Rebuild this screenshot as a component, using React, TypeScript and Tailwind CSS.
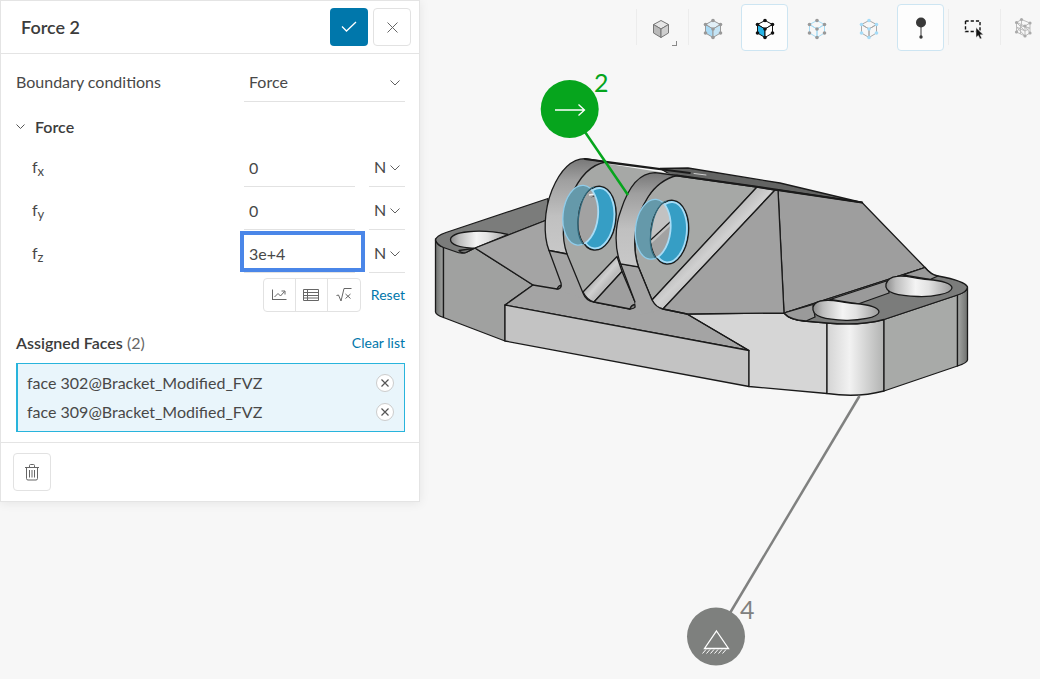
import type { ReactNode } from "react"

const units = ["N", "kN", "lbf"]
const components = [
  { id: "fx", axis: "x", value: "0" },
  { id: "fy", axis: "y", value: "0" },
  { id: "fz", axis: "z", value: "3e+4", active: true },
]
const faces = ["face 302@Bracket_Modified_FVZ", "face 309@Bracket_Modified_FVZ"]

function Chevron({ className = "" }: { className?: string }) {
  return (
    <svg className={className} width="10" height="6" viewBox="0 0 10 6" fill="none" stroke="currentColor">
      <path d="M0.5 0.5 5 5 9.5 0.5" />
    </svg>
  )
}

function PickList({ id, label, options }: { id: string; label?: string; options: string[] }) {
  return (
    <div className="relative w-full">
      <select
        id={id}
        aria-label={label}
        className="h-[38px] w-full appearance-none border-b border-[#e2e2e2] bg-transparent pb-0.5 pl-[5px] text-[#484848] outline-none"
      >
        {options.map((o) => (
          <option key={o}>{o}</option>
        ))}
      </select>
      <Chevron className="pointer-events-none absolute right-[5px] top-4 text-[#606060]" />
    </div>
  )
}

function ForceRow({ id, axis, value, active }: { id: string; axis: string; value: string; active?: boolean }) {
  return (
    <div className="flex h-[38px] items-center">
      <label htmlFor={id} className="flex-1 pb-0.5 pl-4">
        f<sub className="text-[13px]">{axis}</sub>
      </label>
      <div className="relative w-[111px]">
        <input
          id={id}
          defaultValue={value}
          className="block h-[38px] w-full border-b border-[#e2e2e2] bg-transparent pl-[5px] text-[#484848] outline-none"
        />
        {active && (
          <span className="pointer-events-none absolute -left-1 -right-2.5 -top-1 bottom-px border-4 border-[#4a86e8]" />
        )}
      </div>
      <div className="ml-3.5 w-9">
        <PickList id={id + "-unit"} label={"Unit of f" + axis} options={units} />
      </div>
    </div>
  )
}

function Panel() {
  return (
    <aside className="relative z-10 w-[420px] shrink-0 border border-[#e4e4e4] bg-white text-[#484848] shadow-[0_1px_10px_rgba(0,0,0,0.08)]">
      <header className="flex items-center gap-[5px] border-b border-[#e4e4e4] py-[7px] pl-5 pr-2">
        <h1 className="flex-1 text-lg font-semibold text-[#3c3c3c]">Force 2</h1>
        <button aria-label="Apply" className="flex size-[38px] items-center justify-center rounded-sm bg-[#0077ab] text-white">
          <svg width="16" height="12" viewBox="0 0 16 12" fill="none" stroke="currentColor" strokeWidth="1.3">
            <path d="M1 5.5 5.5 10 15 1" />
          </svg>
        </button>
        <button aria-label="Close" className="flex size-[38px] items-center justify-center rounded-sm border border-[#e2e2e2] text-[#666]">
          <svg width="11" height="11" viewBox="0 0 11 11" stroke="currentColor">
            <path d="M0.5 0.5 10.5 10.5M10.5 0.5 0.5 10.5" />
          </svg>
        </button>
      </header>

      <div className="pb-2.5 pl-[15px] pr-3.5 pt-2.5">
        <div className="flex items-center">
          <label htmlFor="bc-type" className="flex-1 pb-0.5">Boundary conditions</label>
          <div className="w-[161px]">
            <PickList id="bc-type" options={["Force", "Pressure", "Fixed support"]} />
          </div>
        </div>

        <button className="mt-[13px] flex items-center gap-2.5 font-semibold text-[#3c3c3c]">
          <svg width="9" height="6" viewBox="0 0 9 6" fill="none" stroke="#555">
            <path d="M0.5 0.5 4.5 4.5 8.5 0.5" />
          </svg>
          Force
        </button>

        <div className="mt-2.5 flex flex-col gap-[5px]">
          {components.map((c) => (
            <ForceRow key={c.id} {...c} />
          ))}
        </div>

        <div className="mt-[5px] flex items-center justify-end gap-2.5 text-[#666]">
          <div className="flex divide-x divide-[#e2e2e2] rounded-sm border border-[#e2e2e2]">
            <button aria-label="Plot" className="flex h-8 w-8 items-center justify-center">
              <svg width="16" height="12" viewBox="0 0 16 12" fill="none" stroke="currentColor">
                <path d="M1.5 0.5V11M1 10.5H15.5M3.5 8 7 4.5 9.5 7 13.5 2.5M10.5 2H14V5.5" />
              </svg>
            </button>
            <button aria-label="Table" className="flex h-8 w-8 items-center justify-center">
              <svg width="16" height="12" viewBox="0 0 16 12" fill="none" stroke="currentColor">
                <path d="M0.5 0.5H15.5V11.5H0.5ZM0.5 3.5H15.5M0.5 6.5H15.5M0.5 9H15.5M4.5 0.5V11.5" />
              </svg>
            </button>
            <button aria-label="Formula" className="flex h-8 w-8 items-center justify-center">
              <svg width="16" height="14" viewBox="0 0 16 14" fill="none" stroke="currentColor">
                <path d="M0.5 7.5 2.5 7 5 13 8 0.5H15.5M9.5 6 14.5 10.5M14.5 6 9.5 10.5" />
              </svg>
            </button>
          </div>
          <a href="#reset" className="text-sm text-[#0077ab]">Reset</a>
        </div>

        <div className="mt-[19px] flex items-center justify-between">
          <h2 className="text-[#666]">
            <span className="font-semibold text-[#3c3c3c]">Assigned Faces</span> (2)
          </h2>
          <a href="#clear" className="text-sm text-[#0077ab]">Clear list</a>
        </div>

        <ul className="mt-2 border border-l-2 border-[#28b4dc] bg-[#e9f5fb] pb-[5px] pl-[9px] pr-2.5 pt-1">
          {faces.map((f) => (
            <li key={f} className="flex h-[29px] items-center justify-between">
              {f}
              <button aria-label={"Remove " + f} className="flex size-[18px] items-center justify-center rounded-full border border-[#ccc] bg-white text-[#555]">
                <svg width="8" height="8" viewBox="0 0 8 8" stroke="currentColor" strokeWidth="1.2">
                  <path d="M0.5 0.5 7.5 7.5M7.5 0.5 0.5 7.5" />
                </svg>
              </button>
            </li>
          ))}
        </ul>
      </div>

      <footer className="border-t border-[#e4e4e4] px-3 py-2.5">
        <button aria-label="Delete" className="flex size-[38px] items-center justify-center rounded-sm border border-[#e2e2e2] text-[#666]">
          <svg width="14" height="17" viewBox="0 0 14 17" fill="none" stroke="currentColor">
            <path d="M0 3.5H14M4.5 3V1.5Q4.5 0.5 5.5 0.5H8.5Q9.5 0.5 9.5 1.5V3M1.5 3.5V14.5Q1.5 16 3 16H11Q12.5 16 12.5 14.5V3.5M4.5 6V13.5M7 6V13.5M9.5 6V13.5" />
          </svg>
        </button>
      </footer>
    </aside>
  )
}

function Cube({ line, dot, top = "none", left = "none", right = "none" }: { line: string; dot?: string; top?: string; left?: string; right?: string }) {
  const points = [[12, 4.5], [4.5, 8.5], [19.5, 8.5], [12, 13], [4.5, 17], [19.5, 17], [12, 21.5]]
  return (
    <svg width="24" height="24" viewBox="0 0 24 24" stroke={line} strokeLinejoin="round">
      <path fill={top} d="M12 4.5 19.5 8.5 12 13 4.5 8.5Z" />
      <path fill={left} d="M4.5 8.5 12 13V21.5L4.5 17Z" />
      <path fill={right} d="M19.5 8.5 12 13V21.5L19.5 17Z" />
      {dot && points.map(([x, y]) => <circle key={x + "," + y} cx={x} cy={y} r="1.8" fill={dot} stroke="none" />)}
    </svg>
  )
}

function Tool({ label, active, divider, children }: { label: string; active?: boolean; divider?: boolean; children: ReactNode }) {
  return (
    <button
      aria-label={label}
      className={
        "relative flex size-[47px] shrink-0 items-center justify-center rounded-sm border " +
        (active ? "border-[#cde5f2] bg-[#fdfdfd]" : "border-transparent")
      }
    >
      {divider && <span className="absolute -left-0.5 top-1 h-9 w-px bg-[#ececec]" />}
      {children}
    </button>
  )
}

function Toolbar() {
  return (
    <div className="overflow-hidden">
      <nav className="-mr-2 flex h-14 items-start justify-end gap-[5px] pt-1">
        <Tool label="Render mode" divider>
          <Cube line="#777" top="#e6e6e6" left="#bababa" right="#cfcfcf" />
          <span className="absolute bottom-1 right-1.5 size-[5px] border-b border-r border-[#888]" />
        </Tool>
        <Tool label="Select volumes" divider>
          <Cube line="#9a9a9a" dot="#999" top="#e1eff7" left="#a9daf5" right="#c4e4f5" />
        </Tool>
        <Tool label="Select faces" active>
          <Cube line="#111" dot="#111" left="#28b4e6" top="#fff" right="#fff" />
        </Tool>
        <Tool label="Select vertices">
          <Cube line="#a5dcf5" dot="#999" />
        </Tool>
        <Tool label="Select edges">
          <Cube line="#a8a8a8" dot="#a5dcf8" />
        </Tool>
        <Tool label="Probe" active>
          <svg width="24" height="24" viewBox="0 0 24 24" fill="#383838">
            <circle cx="12" cy="6.5" r="5" />
            <path d="M12 10V21" stroke="#383838" />
            <circle cx="12" cy="21" r="1.7" />
          </svg>
        </Tool>
        <Tool label="Box select" divider>
          <svg width="24" height="24" viewBox="0 0 24 24">
            <path d="M4.5 5H19V15.5H4.5Z" fill="none" stroke="#111" strokeWidth="1.4" strokeDasharray="3.2 2" />
            <path d="M15 11.5V21.5L17.3 19.5 19 23 20.7 22.2 19.2 18.8H22.3Z" fill="#111" stroke="#f7f7f7" strokeWidth=".5" />
          </svg>
        </Tool>
        <Tool label="Mesh" divider>
          <svg width="24" height="24" viewBox="0 0 24 24" fill="none" stroke="#bbb">
            <path d="M3.5 6.5 8.5 3.5 17 7 12 10ZM3.5 6.5V16L12 20V10M12 20 17 17V7M3.5 11 12 15 17 12M7.5 8.5V18M3.5 6.5 12 15M3.5 11 12 20M12 10 17 17M8.5 3.5V10L17 12M3.5 16 8.5 10" />
            <g fill="#aaa" stroke="none">
              <circle cx="3.5" cy="6.5" r="1.6" />
              <circle cx="8.5" cy="3.5" r="1.6" />
              <circle cx="17" cy="7" r="1.6" />
              <circle cx="12" cy="10" r="1.6" />
              <circle cx="3.5" cy="16" r="1.6" />
              <circle cx="12" cy="20" r="1.6" />
              <circle cx="17" cy="17" r="1.6" />
            </g>
          </svg>
        </Tool>
      </nav>
    </div>
  )
}

// inner surface of a lug hole, highlighted as an assigned face
function Bore({ children }: { children?: ReactNode }) {
  return (
    <>
      <ellipse cx="580.5" cy="215.3" rx="17.5" ry="30" transform="rotate(6 580.5 215.3)" fill="#6599aa" stroke="#8fcdeb" strokeWidth="1.3" />
      <ellipse cx="597.2" cy="218.2" rx="18.7" ry="32" transform="rotate(6 597.2 218.2)" fill="#369ec5" stroke="#1d1d1d" strokeWidth="1.5" />
      <ellipse cx="597.2" cy="218.2" rx="17" ry="30.3" transform="rotate(6 597.2 218.2)" fill="none" stroke="#a9dcf5" strokeWidth="1.8" />
      <g clipPath="url(#bore-front)">
        <g clipPath="url(#bore-back)">
          <rect x="570" y="180" width="40" height="80" fill="#a2a2a2" />
          {children}
        </g>
        <ellipse cx="580.5" cy="215.3" rx="17.5" ry="30" transform="rotate(6 580.5 215.3)" fill="none" stroke="#a9dcf5" strokeWidth="1.8" />
      </g>
      <path d="M583 244C577 236 577 222 580 209C583 197 588 189 594 187" fill="none" stroke="#31687b" strokeWidth="1.3" />
    </>
  )
}

function Viewport() {
  return (
    <svg className="block w-full" viewBox="420 56 620 623" role="img" aria-label="Bracket model">
      <defs>
        <linearGradient id="hole">
          <stop offset="0" stopColor="#8a8a8a" />
          <stop offset=".15" stopColor="#bdbdbd" />
          <stop offset=".45" stopColor="#f4f4f4" />
          <stop offset=".65" stopColor="#e2e2e2" />
          <stop offset="1" stopColor="#9c9c9c" />
        </linearGradient>
        <linearGradient id="corner">
          <stop offset="0" stopColor="#d4d4d4" />
          <stop offset=".4" stopColor="#f2f2f2" />
          <stop offset="1" stopColor="#b2b3b2" />
        </linearGradient>
        <linearGradient id="edge">
          <stop offset="0" stopColor="#a5a7a5" />
          <stop offset="1" stopColor="#6f716f" />
        </linearGradient>
        <linearGradient id="left-edge">
          <stop offset="0" stopColor="#6e706e" />
          <stop offset="1" stopColor="#a3a5a3" />
        </linearGradient>
        <linearGradient id="lug" x1="0" y1="0" x2="0" y2="1">
          <stop offset="0" stopColor="#777" />
          <stop offset=".22" stopColor="#9f9f9f" />
          <stop offset=".6" stopColor="#c0c0c0" />
          <stop offset="1" stopColor="#c8c8c8" />
        </linearGradient>
        <linearGradient id="rib" x1="0" y1="0" x2="1" y2="1">
          <stop offset=".4" stopColor="#b5b5b5" />
          <stop offset=".5" stopColor="#d0d0d0" />
          <stop offset=".6" stopColor="#bcbcbc" />
        </linearGradient>
        <clipPath id="bore-front">
          <ellipse cx="597.2" cy="218.2" rx="18.7" ry="32" transform="rotate(6 597.2 218.2)" />
        </clipPath>
        <clipPath id="bore-back">
          <ellipse cx="580.5" cy="215.3" rx="17.5" ry="30" transform="rotate(6 580.5 215.3)" />
        </clipPath>
      </defs>

      <g stroke="#1a1a1a" strokeWidth="1.3" strokeLinejoin="round" strokeLinecap="round">
        {/* left foot */}
        <path fill="url(#left-edge)" d="M435.5 239V312Q436 315 443.5 317.5V247Q437 245 435.5 239Z" />
        <path fill="#a0a1a0" d="M443.5 247 475 248 533 285 505 305V341L443.5 317.5Z" />
        <path fill="#7b7c7b" d="M435.5 240Q436 236 446 232.5L548 198.5V219.5L475 248 466 252.5Q461 254 455 251.5L443.5 247.5Q437 245 435.5 240Z" />
        <path fill="url(#hole)" d="M508 234.5 474.5 248.3Q450.5 247 450.5 239.5C451 232 478 228 508 234.5Z" />
        <path fill="#747574" d="M459 250.5 474 248.3 466 252.5Q462 254 459 250.5Z" />

        {/* base and front */}
        <path fill="#a4a4a4" d="M475 248 548 219.5 620 240 690 314 749 350.5 505 305 533 285Z" />
        <path fill="#c3c3c3" d="M505 305 749 350.5V386.5L505 341Z" />
        <path fill="#d6d6d6" d="M687 314 784 313Q790 320 804 321L827 323V393.5L749 386.5V350.5Z" />

        {/* back plate */}
        <path fill="#636463" d="M660 168.5 688 168 780 183 862 202.5 760 188 672 175.5Z" />
        <path fill="#9e9e9e" d="M778 190 862 202.5 925 267.5 784 313Z" />

        {/* rear lug */}
        <path fill="#a6a8a6" stroke="none" d="M567 254C560 235 563 205 577 183Q588 166 603 163L672 174 660 190 617 256 636 309 592 302Q585 299 583 293Z" />
        <path fill="url(#lug)" d="M549 250.5C543 235 544 210 552 190Q565 159 585 158.7L606 162C588 165 577 182 571 197Q558 228 567 254Z" />
        <path fill="#a4a4a4" stroke="none" d="M549 250.5 567 254 583 292 592 302 557 289 561 286Z" />
        <path fill="none" d="M549 250.5 561 283Q562 289 557 289L533 285M567 254 583 293Q586 301 594 302L630 309M549 250.5 567 254" />
        <path fill="none" strokeWidth="1.8" d="M585 159 660 169M604 162 690 173" />

        {/* ribs and gap */}
        <path fill="url(#rib)" d="M583 292 617 256.5 622 271.5 594 302Q587 300 583 292Z" />
        <path fill="#9f9f9f" d="M594 302 622 271.5 635 302Q637 309 630 309Z" />
        <path fill="#858585" d="M557 289Q559 285 561 285.5 561 289 557 289ZM630 309Q631 305 635 304.5 636 309 630 309Z" />

        {/* front lug */}
        <path fill="#a6a8a6" d="M638.5 267C632 248 635 222 645 202Q657 179 675 175.5L757 187 652 300Z" />
        <path fill="url(#rib)" d="M652 300 757 187 775 190 663 309Q656 308 652 300Z" />
        <path fill="#a1a1a1" d="M663 309 775 190H778L784 313 687 314Z" />
        <path fill="url(#lug)" d="M620.7 264C615 250 614 228 621 210Q633 173 655 172.7L677 175.5Q659 180 648 197C635 217 631 245 638.5 267Z" />
        <path fill="#a4a4a4" stroke="none" d="M621 265 638 268 652 300Q656 308 663 309L640 315 630 310 636 308 635 302Z" />
        <path fill="none" d="M620.7 264 635 302M638.5 267 652 300Q656 307.5 663 309L687 314 749 350.5" />
        <path fill="none" strokeWidth="2.2" d="M677 175.5 755 186.5 862 202.5" />
        <path stroke="#d0d0d0" strokeWidth="1" d="M694 173.5 706 175" />

        {/* right foot */}
        <path fill="url(#corner)" d="M827 323Q858 326 884 319.5V391Q858 398 827 393.5Z" />
        <path fill="#a8aaa8" d="M884 319.5 957.5 295V366L884 391Z" />
        <path fill="url(#edge)" d="M957.5 295Q967 292 967.5 287V360Q967 363 957.5 366Z" />
        <path fill="#7b7c7b" d="M784 313 925 267.5Q931 275 938 276Q965 281 967.5 287Q967 292 957.5 295L884 319.5Q861 326 827 323L804 321Q790 320 784 313Z" />
        <path fill="#9a9a9a" d="M784 313 813 304.5 815 317 806 321Q790 320 784 313ZM830 299.5 888 280.5 889 293 858 304ZM903 275 925 267.5Q931 275 938 276L930 279.5Z" />
        <path fill="url(#hole)" d="M813 307Q815 301 824 300.5C834 299 842 303 855 303.5C870 304.5 879 308 879 312C878 318 858 320.5 846 320.3C826 319.5 811 317 813 307Z" />
        <path fill="url(#hole)" d="M886 284Q888 277 897 276.3C908 275 915 279 928 279.5C943 280.5 952 284 952 288C951 294 932 297 918 296.5C898 296 884 293 886 284Z" />
      </g>

      <Bore>
        <path d="M588 200 604 188V200Z" fill="#333" />
        <path d="M589 195 601 193" stroke="#eee" strokeWidth="1.5" />
        <path d="M570 203 604 194V203L586 203Z" fill="#a2a2a2" />
      </Bore>
      <g transform="translate(72.5 14)">
        <Bore>
          <path d="M574 182H604V206L574 234Z" fill="#c2c2c2" />
          <path d="M574 230 604 202" stroke="#1a1a1a" strokeWidth="1.3" />
        </Bore>
      </g>

      {/* load marker */}
      <path d="M585 132 628 195" stroke="#06a51d" strokeWidth="2.5" />
      <circle cx="569.7" cy="109" r="29" fill="#06a51d" />
      <path d="M555 110H584M578.5 104.5 584.5 110 578.5 115.5" fill="none" stroke="#fff" strokeWidth="1.3" />
      <text x="594" y="92" fill="#06a51d" fontSize="25">2</text>

      {/* support marker */}
      <path d="M859.5 396 730 613" stroke="#808180" strokeWidth="2.5" />
      <circle cx="716" cy="636.5" r="29" fill="#7e807e" />
      <path d="M716.5 631 728.5 648.5H704.5Z" fill="none" stroke="#fff" strokeWidth="1.3" />
      <path d="M706 649.5 702.5 653.5M710 649.5 706.5 653.5M714 649.5 710.5 653.5M718 649.5 714.5 653.5M722 649.5 718.5 653.5M726 649.5 722.5 653.5" stroke="#fff" />
      <text x="740" y="619" fill="#808180" fontSize="25">4</text>
    </svg>
  )
}

export default function App() {
  return (
    <div className="flex min-h-screen items-start bg-[#f7f7f7] font-['Lato',sans-serif] text-base">
      <Panel />
      <main className="min-w-0 flex-1">
        <Toolbar />
        <Viewport />
      </main>
    </div>
  )
}
